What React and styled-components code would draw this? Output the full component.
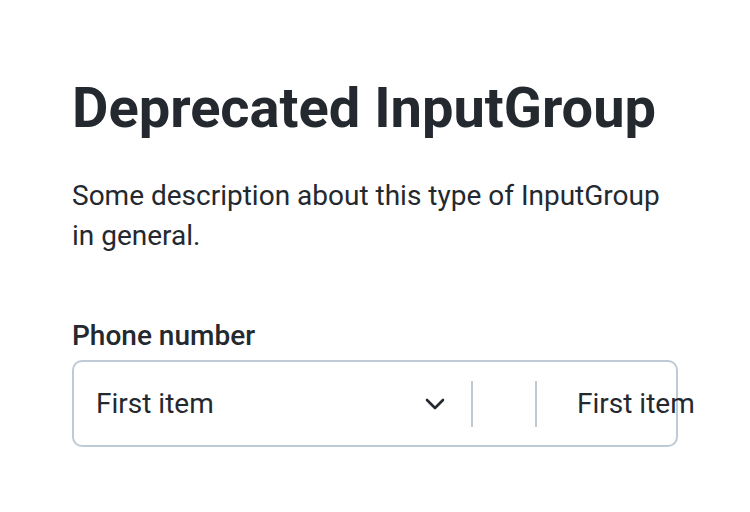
import React from "react";
import styled, { createGlobalStyle } from "styled-components";

const GlobalStyle = createGlobalStyle`
  body {
    margin: 0;
    background: #ffffff;
    font-family: Roboto, "Liberation Sans", sans-serif;
    color: #24292f;
  }
`;

const Page = styled.div`
  padding: 72px 72px 0 72px;
`;

const Title = styled.h1`
  margin: 0;
  font-size: 56px;
  font-weight: 700;
  line-height: 72px;
`;

const Description = styled.p`
  margin: 32px 0 0 0;
  max-width: 600px;
  font-size: 28px;
  line-height: 40px;
`;

const Label = styled.div`
  margin-top: 64px;
  font-size: 28px;
  font-weight: 500;
  line-height: 32px;
`;

const Group = styled.div`
  margin-top: 8px;
  width: 606px;
  height: 87px;
  box-sizing: border-box;
  border: 2px solid #bfcad7;
  border-radius: 10px;
  display: flex;
  align-items: center;
`;

const Select = styled.div`
  flex: 0 0 397px;
  box-sizing: border-box;
  display: flex;
  align-items: center;
  justify-content: space-between;
  padding: 0 26px 0 22px;
  font-size: 28px;
`;

const Divider = styled.div`
  flex: 0 0 2px;
  height: 46px;
  background: #bfcad7;
`;

const Spacer = styled.div`
  flex: 0 0 ${(p) => p.width}px;
`;

const Value = styled.div`
  flex: 0 0 auto;
  padding-left: 40px;
  font-size: 28px;
  white-space: nowrap;
`;

const Chevron = () => (
  <svg width="20" height="12" viewBox="0 0 20 12" fill="none" stroke="#24292f" strokeWidth="2.6" strokeLinecap="round" strokeLinejoin="round">
    <path d="M2 2l8 8 8-8" />
  </svg>
);

export default function App() {
  return (
    <Page>
      <GlobalStyle />
      <Title>Deprecated InputGroup</Title>
      <Description>
        Some description about this type of InputGroup in general.
      </Description>
      <Label>Phone number</Label>
      <Group>
        <Select>
          <span>First item</span>
          <Chevron />
        </Select>
        <Divider />
        <Spacer width={62} />
        <Divider />
        <Value>First item</Value>
      </Group>
    </Page>
  );
}
